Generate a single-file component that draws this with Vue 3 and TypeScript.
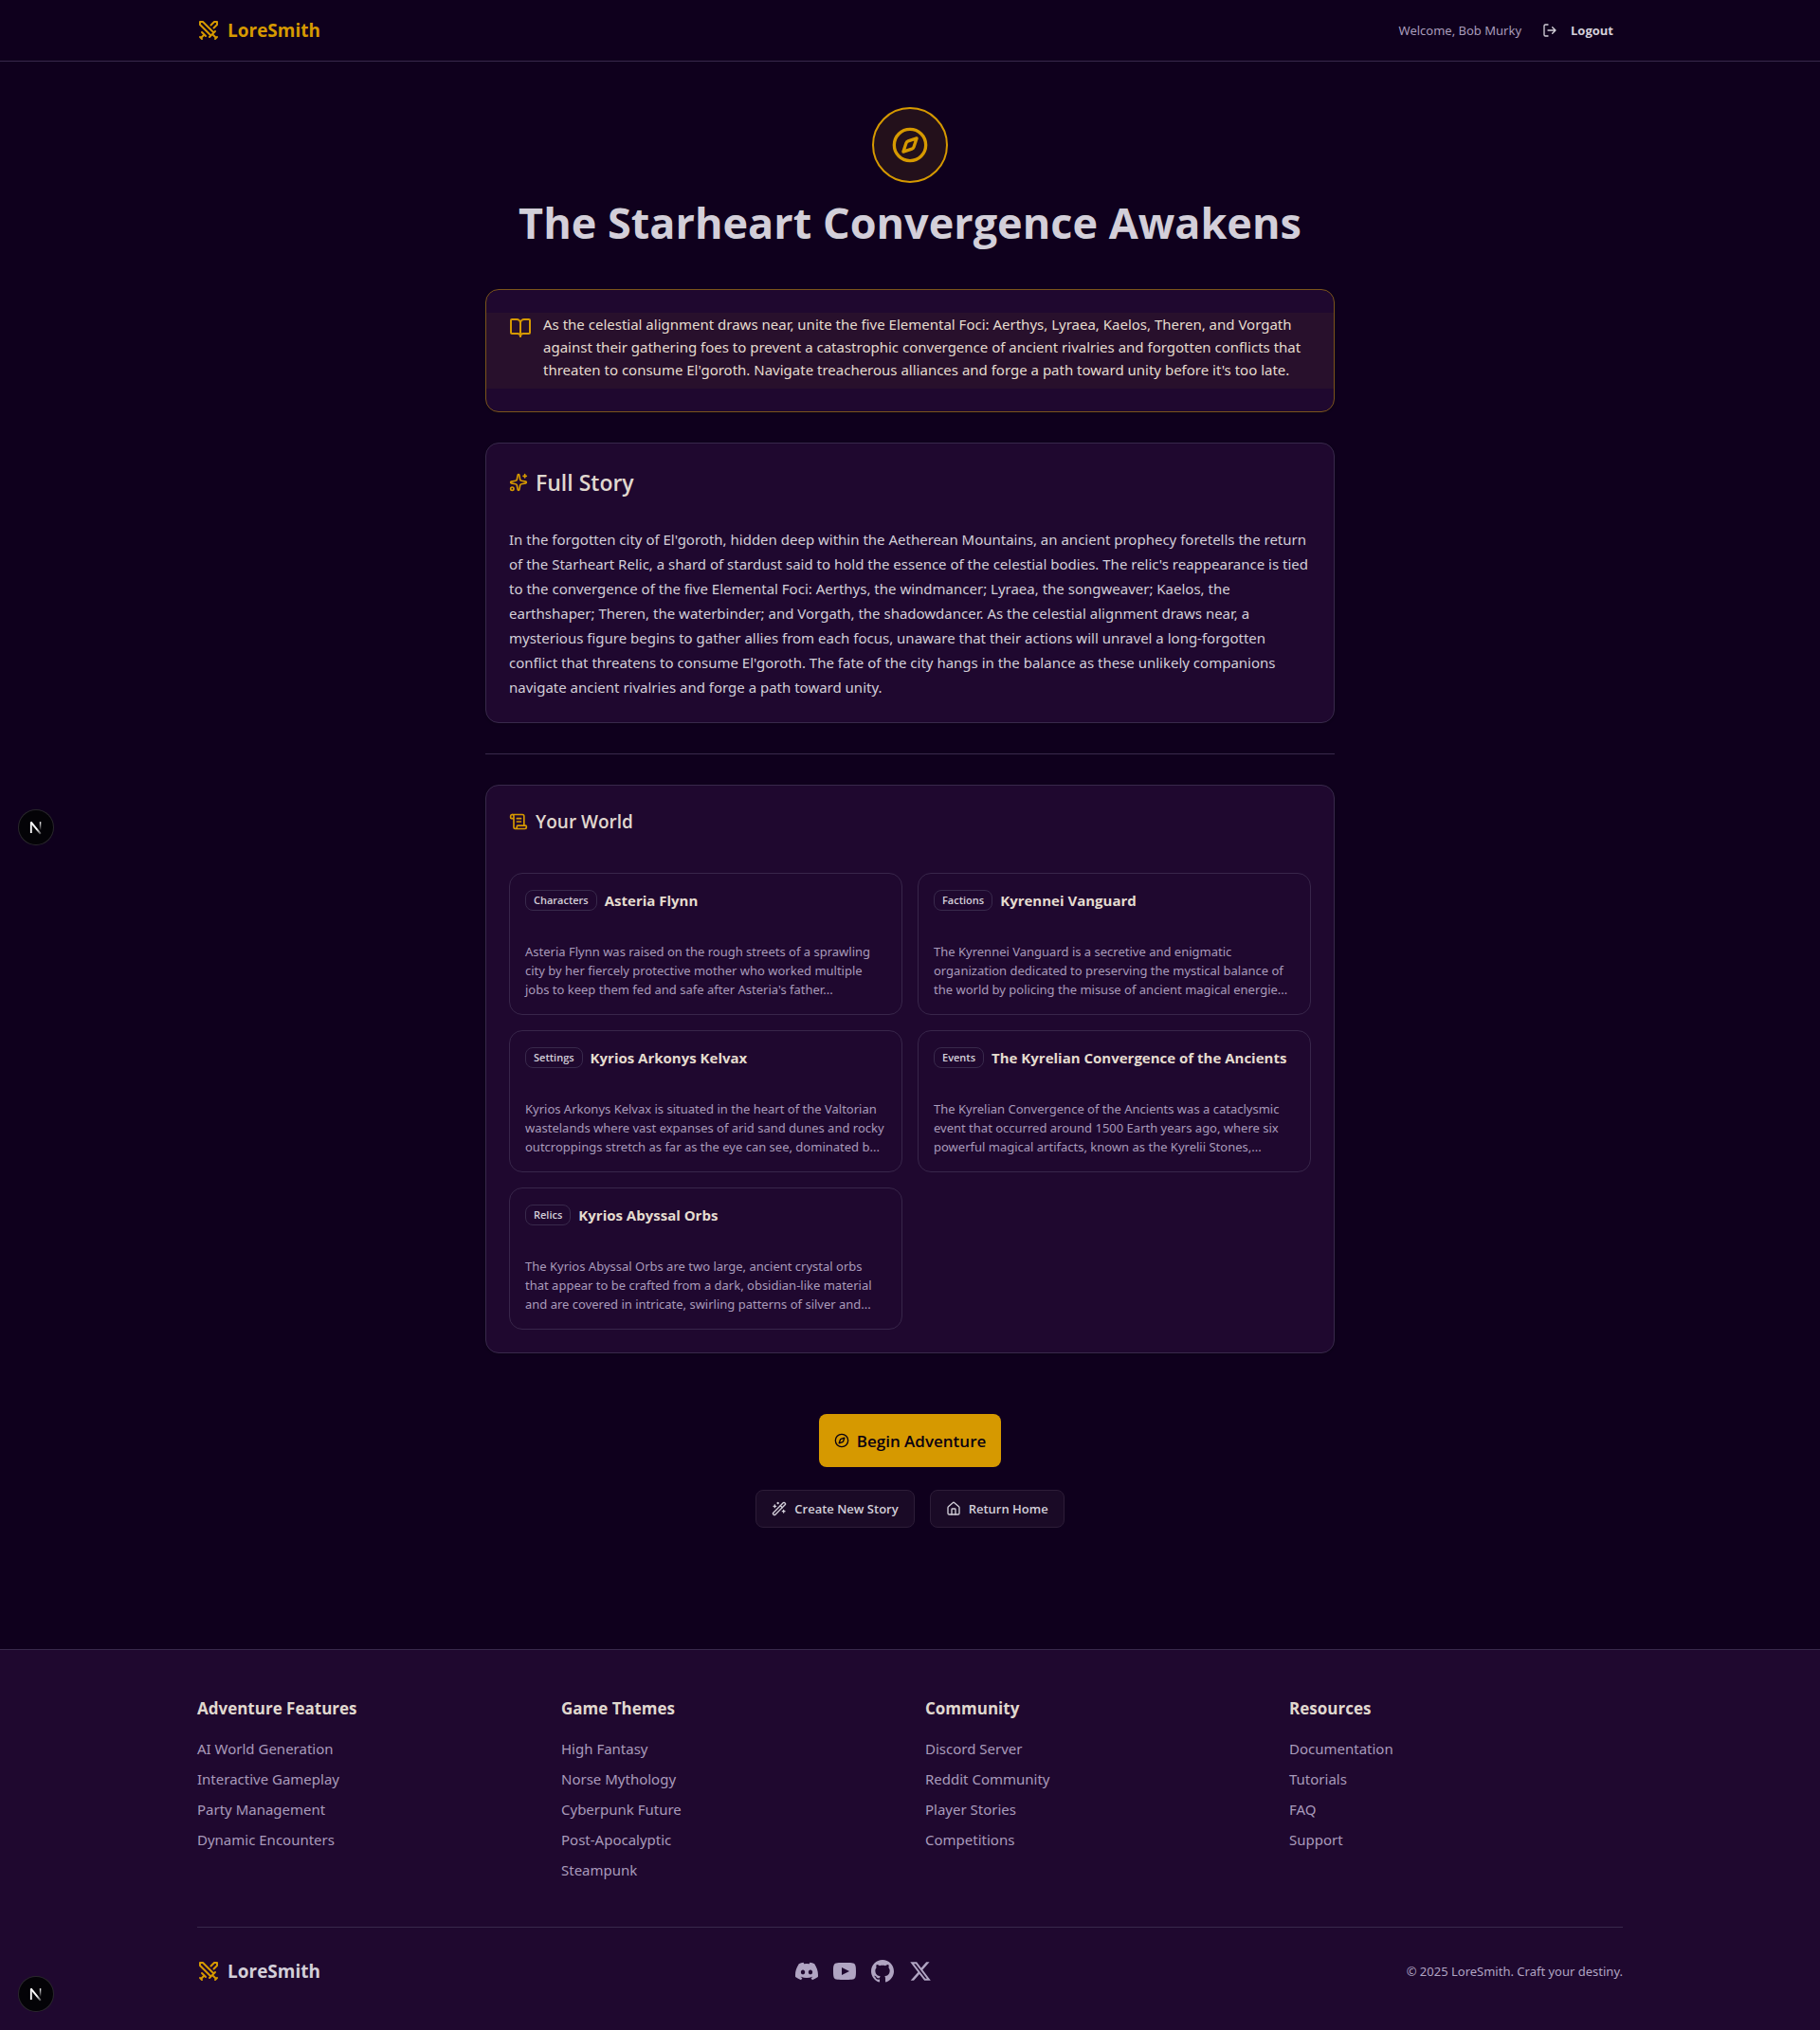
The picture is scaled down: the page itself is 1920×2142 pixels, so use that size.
<script setup lang="ts">
interface WorldEntry {
  kind: string
  name: string
  summary: string
}

interface LinkGroup {
  title: string
  links: string[]
}

interface Social {
  name: string
  path: string
}

const userName = 'Bob Murky'

const teaser = `As the celestial alignment draws near, unite the five Elemental Foci: Aerthys, Lyraea, Kaelos, Theren, and Vorgath
against their gathering foes to prevent a catastrophic convergence of ancient rivalries and forgotten conflicts that
threaten to consume El'goroth. Navigate treacherous alliances and forge a path toward unity before it's too late.`

const story = `In the forgotten city of El'goroth, hidden deep within the Aetherean Mountains, an ancient prophecy foretells the return
of the Starheart Relic, a shard of stardust said to hold the essence of the celestial bodies. The relic's reappearance is tied
to the convergence of the five Elemental Foci: Aerthys, the windmancer; Lyraea, the songweaver; Kaelos, the
earthshaper; Theren, the waterbinder; and Vorgath, the shadowdancer. As the celestial alignment draws near, a
mysterious figure begins to gather allies from each focus, unaware that their actions will unravel a long-forgotten
conflict that threatens to consume El'goroth. The fate of the city hangs in the balance as these unlikely companions
navigate ancient rivalries and forge a path toward unity.`

const world: WorldEntry[] = [
  {
    kind: 'Characters',
    name: 'Asteria Flynn',
    summary: `Asteria Flynn was raised on the rough streets of a sprawling
city by her fiercely protective mother who worked multiple
jobs to keep them fed and safe after Asteria's father...`,
  },
  {
    kind: 'Factions',
    name: 'Kyrennei Vanguard',
    summary: `The Kyrennei Vanguard is a secretive and enigmatic
organization dedicated to preserving the mystical balance of
the world by policing the misuse of ancient magical energie...`,
  },
  {
    kind: 'Settings',
    name: 'Kyrios Arkonys Kelvax',
    summary: `Kyrios Arkonys Kelvax is situated in the heart of the Valtorian
wastelands where vast expanses of arid sand dunes and rocky
outcroppings stretch as far as the eye can see, dominated b...`,
  },
  {
    kind: 'Events',
    name: 'The Kyrelian Convergence of the Ancients',
    summary: `The Kyrelian Convergence of the Ancients was a cataclysmic
event that occurred around 1500 Earth years ago, where six
powerful magical artifacts, known as the Kyrelii Stones,...`,
  },
  {
    kind: 'Relics',
    name: 'Kyrios Abyssal Orbs',
    summary: `The Kyrios Abyssal Orbs are two large, ancient crystal orbs
that appear to be crafted from a dark, obsidian-like material
and are covered in intricate, swirling patterns of silver and...`,
  },
]

const groups: LinkGroup[] = [
  {
    title: 'Adventure Features',
    links: ['AI World Generation', 'Interactive Gameplay', 'Party Management', 'Dynamic Encounters'],
  },
  {
    title: 'Game Themes',
    links: ['High Fantasy', 'Norse Mythology', 'Cyberpunk Future', 'Post-Apocalyptic', 'Steampunk'],
  },
  {
    title: 'Community',
    links: ['Discord Server', 'Reddit Community', 'Player Stories', 'Competitions'],
  },
  {
    title: 'Resources',
    links: ['Documentation', 'Tutorials', 'FAQ', 'Support'],
  },
]

const socials: Social[] = [
  {
    name: 'Discord',
    path: 'M20.317 4.37a19.791 19.791 0 0 0-4.885-1.515.074.074 0 0 0-.079.037c-.21.375-.444.864-.608 1.25a18.27 18.27 0 0 0-5.487 0 12.64 12.64 0 0 0-.617-1.25.077.077 0 0 0-.079-.037A19.736 19.736 0 0 0 3.677 4.37a.07.07 0 0 0-.032.027C.533 9.046-.32 13.58.099 18.057a.082.082 0 0 0 .031.057 19.9 19.9 0 0 0 5.993 3.03.078.078 0 0 0 .084-.028 14.09 14.09 0 0 0 1.226-1.994.076.076 0 0 0-.041-.106 13.107 13.107 0 0 1-1.872-.892.077.077 0 0 1-.008-.128 10.2 10.2 0 0 0 .372-.292.074.074 0 0 1 .077-.01c3.928 1.793 8.18 1.793 12.062 0a.074.074 0 0 1 .078.01c.12.098.246.198.373.292a.077.077 0 0 1-.006.127 12.299 12.299 0 0 1-1.873.892.077.077 0 0 0-.041.107c.36.698.772 1.362 1.225 1.993a.076.076 0 0 0 .084.028 19.839 19.839 0 0 0 6.002-3.03.077.077 0 0 0 .032-.054c.5-5.177-.838-9.674-3.549-13.66a.061.061 0 0 0-.031-.03zM8.02 15.33c-1.183 0-2.157-1.085-2.157-2.419 0-1.333.956-2.419 2.157-2.419 1.21 0 2.176 1.096 2.157 2.42 0 1.333-.956 2.418-2.157 2.418zm7.975 0c-1.183 0-2.157-1.085-2.157-2.419 0-1.333.955-2.419 2.157-2.419 1.21 0 2.176 1.096 2.157 2.42 0 1.333-.946 2.418-2.157 2.418z',
  },
  {
    name: 'YouTube',
    path: 'M19.615 3.184c-3.604-.246-11.631-.245-15.23 0-3.897.266-4.356 2.62-4.385 8.816.029 6.185.484 8.549 4.385 8.816 3.6.245 11.626.246 15.23 0 3.897-.266 4.356-2.62 4.385-8.816-.029-6.185-.484-8.549-4.385-8.816zm-10.615 12.816v-8l8 3.993-8 4.007z',
  },
  {
    name: 'GitHub',
    path: 'M12 0c-6.626 0-12 5.373-12 12 0 5.302 3.438 9.8 8.207 11.387.599.111.793-.261.793-.577v-2.234c-3.338.726-4.033-1.416-4.033-1.416-.546-1.387-1.333-1.756-1.333-1.756-1.089-.745.083-.729.083-.729 1.205.084 1.839 1.237 1.839 1.237 1.07 1.834 2.807 1.304 3.492.997.107-.775.418-1.305.762-1.604-2.665-.305-5.467-1.334-5.467-5.931 0-1.311.469-2.381 1.236-3.221-.124-.303-.535-1.524.117-3.176 0 0 1.008-.322 3.301 1.23.957-.266 1.983-.399 3.003-.404 1.02.005 2.047.138 3.006.404 2.291-1.552 3.297-1.23 3.297-1.23.653 1.653.242 2.874.118 3.176.77.84 1.235 1.911 1.235 3.221 0 4.609-2.807 5.624-5.479 5.921.43.372.823 1.102.823 2.222v3.293c0 .319.192.694.801.576 4.765-1.589 8.199-6.086 8.199-11.386 0-6.627-5.373-12-12-12z',
  },
  {
    name: 'X',
    path: 'M18.244 2.25h3.308l-7.227 8.26 8.502 11.24H16.17l-5.214-6.817L4.99 21.75H1.68l7.73-8.835L1.254 2.25H8.08l4.713 6.231zm-1.161 17.52h1.833L7.084 4.126H5.117z',
  },
]
</script>

<template>
  <div class="page">
    <header class="topbar">
      <div class="container topbar-row">
        <a class="brand brand-gold" href="#">
          <svg class="icon icon-24 gold" viewBox="0 0 24 24" aria-hidden="true">
            <path d="M14.5 17.5 3 6V3h3l11.5 11.5M13 19l6-6M16 16l4 4M19 21l2-2M14.5 6.5 18 3h3v3l-3.5 3.5M5 14l4 4M7 17l-3 3M3 19l2 2" />
          </svg>
          <span>LoreSmith</span>
        </a>
        <div class="account">
          <span class="welcome">Welcome, {{ userName }}</span>
          <button class="logout" type="button">
            <svg class="icon icon-16" viewBox="0 0 24 24" aria-hidden="true">
              <path d="M9 21H5a2 2 0 0 1-2-2V5a2 2 0 0 1 2-2h4M16 17l5-5-5-5M21 12H9" />
            </svg>
            <span>Logout</span>
          </button>
        </div>
      </div>
    </header>

    <main class="content">
      <section class="hero">
        <div class="hero-badge">
          <svg class="icon icon-40 gold" viewBox="0 0 24 24" aria-hidden="true">
            <circle cx="12" cy="12" r="10" />
            <path d="m16.24 7.76-1.804 5.411a2 2 0 0 1-1.265 1.265L7.76 16.24l1.804-5.411a2 2 0 0 1 1.265-1.265z" />
          </svg>
        </div>
        <h1>The Starheart Convergence Awakens</h1>
      </section>

      <section class="card teaser">
        <div class="teaser-band">
          <svg class="icon icon-24 gold" viewBox="0 0 24 24" aria-hidden="true">
            <path d="M12 7v14" />
            <path d="M3 18a1 1 0 0 1-1-1V4a1 1 0 0 1 1-1h5a4 4 0 0 1 4 4 4 4 0 0 1 4-4h5a1 1 0 0 1 1 1v13a1 1 0 0 1-1 1h-6a3 3 0 0 0-3 3 3 3 0 0 0-3-3z" />
          </svg>
          <p>{{ teaser }}</p>
        </div>
      </section>

      <section class="card">
        <h2 class="card-title title-large">
          <svg class="icon icon-20 gold" viewBox="0 0 24 24" aria-hidden="true">
            <path d="M11.017 2.814a1 1 0 0 1 1.966 0l1.051 5.558a2 2 0 0 0 1.594 1.594l5.558 1.051a1 1 0 0 1 0 1.966l-5.558 1.051a2 2 0 0 0-1.594 1.594l-1.051 5.558a1 1 0 0 1-1.966 0l-1.051-5.558a2 2 0 0 0-1.594-1.594l-5.558-1.051a1 1 0 0 1 0-1.966l5.558-1.051a2 2 0 0 0 1.594-1.594z" />
            <path d="M20 2v4M22 4h-4" />
            <circle cx="4" cy="20" r="2" />
          </svg>
          <span>Full Story</span>
        </h2>
        <p class="story">{{ story }}</p>
      </section>

      <hr class="divider" />

      <section class="card">
        <h2 class="card-title">
          <svg class="icon icon-20 gold" viewBox="0 0 24 24" aria-hidden="true">
            <path d="M15 12h-5M15 8h-5M19 17V5a2 2 0 0 0-2-2H4" />
            <path d="M8 21h12a2 2 0 0 0 2-2v-1a1 1 0 0 0-1-1H11a1 1 0 0 0-1 1v1a2 2 0 1 1-4 0V5a2 2 0 1 0-4 0v2a1 1 0 0 0 1 1h3" />
          </svg>
          <span>Your World</span>
        </h2>
        <div class="world">
          <article v-for="entry in world" :key="entry.name" class="entry">
            <div class="entry-head">
              <span class="tag">{{ entry.kind }}</span>
              <h3>{{ entry.name }}</h3>
            </div>
            <p>{{ entry.summary }}</p>
          </article>
        </div>
      </section>

      <div class="actions">
        <button class="primary" type="button">
          <svg class="icon icon-16" viewBox="0 0 24 24" aria-hidden="true">
            <circle cx="12" cy="12" r="10" />
            <path d="m16.24 7.76-1.804 5.411a2 2 0 0 1-1.265 1.265L7.76 16.24l1.804-5.411a2 2 0 0 1 1.265-1.265z" />
          </svg>
          <span>Begin Adventure</span>
        </button>
        <div class="actions-row">
          <button class="secondary" type="button">
            <svg class="icon icon-16" viewBox="0 0 24 24" aria-hidden="true">
              <path d="m21.64 3.64-1.28-1.28a1.21 1.21 0 0 0-1.72 0L2.36 18.64a1.21 1.21 0 0 0 0 1.72l1.28 1.28a1.2 1.2 0 0 0 1.72 0L21.64 5.36a1.2 1.2 0 0 0 0-1.72" />
              <path d="m14 7 3 3M5 6v4M19 14v4M10 2v2M7 8H3M21 16h-4M11 3H9" />
            </svg>
            <span>Create New Story</span>
          </button>
          <button class="secondary" type="button">
            <svg class="icon icon-16" viewBox="0 0 24 24" aria-hidden="true">
              <path d="M15 21v-8a1 1 0 0 0-1-1h-4a1 1 0 0 0-1 1v8" />
              <path d="M3 10a2 2 0 0 1 .709-1.528l7-5.999a2 2 0 0 1 2.582 0l7 5.999A2 2 0 0 1 21 10v9a2 2 0 0 1-2 2H5a2 2 0 0 1-2-2z" />
            </svg>
            <span>Return Home</span>
          </button>
        </div>
      </div>
    </main>

    <footer class="footer">
      <div class="container">
        <div class="footer-grid">
          <nav v-for="group in groups" :key="group.title" :aria-label="group.title">
            <h3>{{ group.title }}</h3>
            <ul>
              <li v-for="link in group.links" :key="link">
                <a href="#">{{ link }}</a>
              </li>
            </ul>
          </nav>
        </div>
        <div class="footer-bottom">
          <a class="brand" href="#">
            <svg class="icon icon-24 gold" viewBox="0 0 24 24" aria-hidden="true">
              <path d="M14.5 17.5 3 6V3h3l11.5 11.5M13 19l6-6M16 16l4 4M19 21l2-2M14.5 6.5 18 3h3v3l-3.5 3.5M5 14l4 4M7 17l-3 3M3 19l2 2" />
            </svg>
            <span>LoreSmith</span>
          </a>
          <div class="socials">
            <a v-for="social in socials" :key="social.name" href="#" :aria-label="social.name">
              <svg width="24" height="24" viewBox="0 0 24 24" fill="currentColor" aria-hidden="true">
                <path :d="social.path" />
              </svg>
            </a>
          </div>
          <p class="copyright">© 2025 LoreSmith. Craft your destiny.</p>
        </div>
      </div>
    </footer>

    <button
      v-for="place in ['middle', 'bottom']"
      :key="place"
      class="dev-badge"
      :class="`dev-badge-${place}`"
      type="button"
      aria-label="Open dev tools"
    >
      <svg width="36" height="36" viewBox="0 0 36 36" fill="none" aria-hidden="true">
        <defs>
          <linearGradient :id="`stem-${place}`" x1="0" y1="12" x2="0" y2="21" gradientUnits="userSpaceOnUse">
            <stop stop-color="#fff" />
            <stop offset="1" stop-color="#fff" stop-opacity="0" />
          </linearGradient>
          <linearGradient :id="`slash-${place}`" x1="20" y1="19" x2="24" y2="25" gradientUnits="userSpaceOnUse">
            <stop stop-color="#fff" />
            <stop offset="1" stop-color="#fff" stop-opacity="0.2" />
          </linearGradient>
        </defs>
        <path d="M12.8 24V12.4" stroke="#fff" stroke-width="1.8" />
        <path d="M12.6 12.4 22.8 24.8" :stroke="`url(#slash-${place})`" stroke-width="2" />
        <path d="M21.8 12.2h1.5v9h-1.5z" :fill="`url(#stem-${place})`" />
      </svg>
    </button>
  </div>
</template>

<style>
body {
  margin: 0;
  background: #0f001d;
}
</style>

<style scoped>
.page {
  position: relative;
  min-height: 100vh;
  display: flex;
  flex-direction: column;
  background: #0f001d;
  color: #d3cfd9;
  font-family: "Noto Sans", "Open Sans", sans-serif;
  font-size: 15px;
  line-height: 24px;
}

h1,
h2,
h3,
p,
ul {
  margin: 0;
  padding: 0;
}

h1,
h2,
h3,
.brand,
.tag,
.logout,
.primary,
.secondary {
  font-family: "Open Sans", "Noto Sans", sans-serif;
}

ul {
  list-style: none;
}

a {
  color: inherit;
  text-decoration: none;
}

button {
  color: inherit;
  cursor: pointer;
}

.container {
  box-sizing: border-box;
  width: 100%;
  max-width: 1536px;
  margin: 0 auto;
  padding: 0 16px;
}

.icon {
  flex: none;
  fill: none;
  stroke: currentColor;
  stroke-width: 2;
  stroke-linecap: round;
  stroke-linejoin: round;
}

.icon-16 {
  width: 16px;
  height: 16px;
}

.icon-20 {
  width: 20px;
  height: 20px;
}

.icon-24 {
  width: 24px;
  height: 24px;
}

.icon-40 {
  width: 40px;
  height: 40px;
}

.gold {
  color: #d69900;
}

.topbar {
  border-bottom: 1px solid #38294b;
}

.topbar-row {
  height: 64px;
  display: flex;
  align-items: center;
  justify-content: space-between;
}

.brand {
  display: flex;
  align-items: center;
  gap: 8px;
  font-size: 19px;
  line-height: 28px;
  font-weight: 700;
}

.brand-gold {
  color: #d69900;
}

.account {
  display: flex;
  align-items: center;
  gap: 12px;
  font-size: 13px;
}

.welcome {
  color: #a99bbb;
}

.logout {
  display: flex;
  align-items: center;
  gap: 14px;
  padding: 4px 10px;
  border: 0;
  background: none;
  font-size: 13px;
  line-height: 24px;
  font-weight: 700;
}

.content {
  box-sizing: border-box;
  width: 100%;
  max-width: 928px;
  margin: 0 auto;
  padding: 48px 16px 128px;
}

.hero {
  display: flex;
  flex-direction: column;
  align-items: center;
  gap: 16px;
  margin-bottom: 44px;
}

.hero-badge {
  box-sizing: border-box;
  width: 80px;
  height: 80px;
  display: flex;
  align-items: center;
  justify-content: center;
  border: 2px solid #d69900;
  border-radius: 50%;
  background: #23101b;
}

h1 {
  font-size: 45px;
  line-height: 52px;
  font-weight: 700;
  text-align: center;
}

.card {
  padding: 24px;
  border: 1px solid #38294b;
  border-radius: 14px;
  background: #1f082f;
  box-shadow: 0 1px 3px rgba(0, 0, 0, 0.2);
}

.teaser {
  margin-bottom: 32px;
  padding: 24px 0;
  border-color: #7b541b;
}

.teaser-band {
  display: flex;
  gap: 12px;
  padding: 0 24px 8px;
  background: #28102c;
  color: #e5dccf;
}

.teaser-band .icon {
  margin-top: 4px;
}

.teaser-band p,
.story,
.entry p {
  white-space: pre-line;
}

.card-title {
  display: flex;
  align-items: center;
  gap: 8px;
  height: 28px;
  margin-bottom: 40px;
  color: #e0d8cf;
  font-size: 19px;
  line-height: 28px;
  font-weight: 600;
}

.title-large {
  height: 34px;
  margin-bottom: 30px;
  font-size: 23px;
}

.story {
  line-height: 26px;
}

.divider {
  height: 1px;
  margin: 32px 0;
  border: 0;
  background: #38294b;
}

.world {
  display: grid;
  grid-template-columns: repeat(auto-fit, minmax(380px, 1fr));
  gap: 16px;
}

.entry {
  padding: 16px;
  border: 1px solid #38264a;
  border-radius: 14px;
}

.entry-head {
  display: flex;
  align-items: center;
  gap: 8px;
  height: 24px;
  margin-bottom: 32px;
}

.entry-head h3 {
  color: #e5dccf;
  font-size: 15px;
  line-height: 24px;
  font-weight: 700;
}

.tag {
  padding: 0 8px;
  border: 1px solid #38294b;
  border-radius: 8px;
  font-size: 11px;
  line-height: 20px;
  font-weight: 600;
}

.entry p {
  color: #a99bbb;
  font-size: 13px;
  line-height: 20px;
}

.actions {
  display: flex;
  flex-direction: column;
  align-items: center;
  gap: 24px;
  margin-top: 64px;
}

.actions-row {
  display: flex;
  gap: 16px;
}

.primary,
.secondary {
  display: flex;
  align-items: center;
  justify-content: center;
  gap: 8px;
  border-radius: 8px;
}

.primary {
  height: 56px;
  padding: 0 16px;
  border: 0;
  background: #d69900;
  color: #0a0010;
  font-size: 17px;
  font-weight: 600;
}

.secondary {
  height: 40px;
  padding: 0 16px;
  border: 1px solid #2d1d38;
  background: #1a0a26;
  font-size: 13px;
  font-weight: 600;
}

.footer {
  flex: 1;
  padding: 48px 0;
  border-top: 1px solid #38294b;
  background: #1f082f;
}

.footer-grid {
  display: grid;
  grid-template-columns: repeat(4, 1fr);
  gap: 32px;
}

.footer-grid h3 {
  margin-bottom: 16px;
  color: #e0d8cf;
  font-size: 17px;
  line-height: 28px;
  font-weight: 700;
}

.footer-grid ul {
  display: flex;
  flex-direction: column;
  gap: 8px;
  color: #a99bbb;
}

.footer-bottom {
  display: flex;
  align-items: center;
  justify-content: space-between;
  margin-top: 48px;
  padding-top: 32px;
  border-top: 1px solid #38294b;
}

.socials {
  display: flex;
  gap: 16px;
  color: #b0a4c2;
}

.socials svg {
  display: block;
}

.copyright {
  color: #b0a4c2;
  font-size: 13px;
}

.dev-badge {
  position: absolute;
  left: 20px;
  width: 36px;
  height: 36px;
  padding: 0;
  border: 0;
  border-radius: 50%;
  background: #040307;
  box-shadow: 0 0 0 1px #2a282c;
}

.dev-badge svg {
  display: block;
}

.dev-badge-middle {
  top: 855px;
}

.dev-badge-bottom {
  bottom: 20px;
}
</style>
